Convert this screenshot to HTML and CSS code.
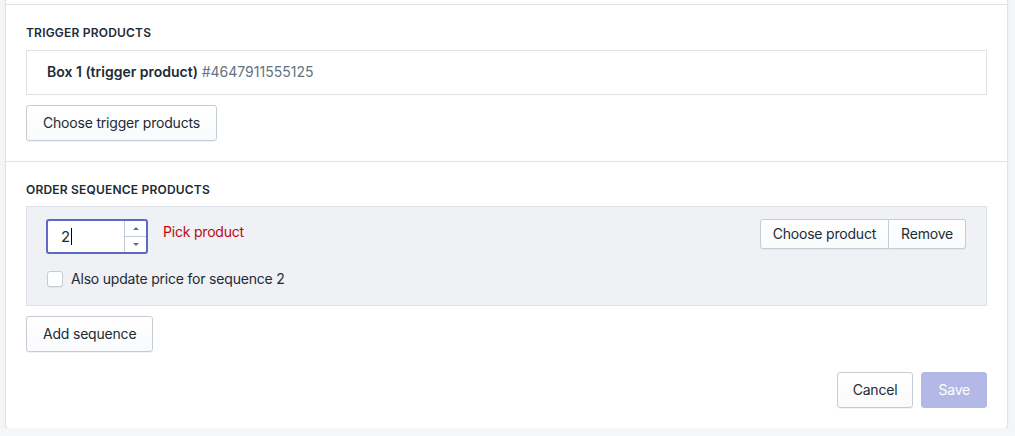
FILE: index.html
```html
<!DOCTYPE html>
<html>
<head>
<meta charset="utf-8">
<link rel="stylesheet" href="styles.css">
</head>
<body>
<div class="page">
  <div class="card">
    <div class="stub"></div>
    <section class="section">
      <h2 class="subheading">Trigger products</h2>
      <div class="product-box">
        <span class="product-name">Box 1 (trigger product)</span>
        <span class="product-id">#4647911555125</span>
      </div>
      <button class="btn btn-mt">Choose trigger products</button>
    </section>
    <section class="section">
      <h2 class="subheading">Order sequence products</h2>
      <div class="sequence">
        <div class="seq-row">
          <div class="number-field">
            <span class="num-value">2<span class="caret"></span></span>
            <div class="spinner">
              <div class="spin-seg"><span class="arrow-up"></span></div>
              <div class="spin-seg"><span class="arrow-down"></span></div>
            </div>
          </div>
          <span class="error">Pick product</span>
          <div class="btn-group">
            <button class="btn btn-slim">Choose product</button>
            <button class="btn btn-slim">Remove</button>
          </div>
        </div>
        <label class="check-row">
          <span class="checkbox"></span>
          <span>Also update price for sequence 2</span>
        </label>
      </div>
      <button class="btn btn-add">Add sequence</button>
    </section>
    <div class="footer">
      <button class="btn">Cancel</button>
      <button class="btn btn-primary">Save</button>
    </div>
  </div>
</div>
</body>
</html>
```

FILE: styles.css
```css
html, body {
  margin: 0;
  padding: 0;
  background: #f4f6f8;
}
body {
  font-family: "Inter", "Roboto", "Liberation Sans", sans-serif;
  font-size: 14px;
  line-height: 20px;
  color: #212b36;
  letter-spacing: -0.2px;
}
.page {
  padding-left: 6px;
}
.card {
  width: 1001px;
  margin-top: -10px;
  background: #fff;
  border-radius: 3px;
  box-shadow: 0 0 0 1px rgba(63,63,68,.05), 0 1px 3px 0 rgba(63,63,68,.15);
}
.stub {
  height: 14px;
}
.section {
  border-top: 1px solid #dfe3e8;
  padding: 20px 20px 20px;
}
.subheading {
  margin: 0 0 8px;
  font-size: 12px;
  line-height: 16px;
  font-weight: 600;
  text-transform: uppercase;
  letter-spacing: 0.2px;
  color: #212b36;
}
.section:first-of-type .subheading {
  margin-bottom: 9px;
}
.product-box {
  border: 1px solid #dfe3e8;
  padding: 11px 20px 12px;
}
.product-name {
  font-weight: 600;
  letter-spacing: 0;
}
.product-id {
  color: #637381;
  letter-spacing: 0;
}
.btn {
  font-family: inherit;
  font-size: 14px;
  line-height: 16px;
  letter-spacing: -0.2px;
  color: #212b36;
  height: 36px;
  padding: 0 16px;
  border: 1px solid #c4cdd5;
  border-radius: 3px;
  background: linear-gradient(180deg, #fff, #f9fafb);
  box-shadow: 0 1px 0 0 rgba(22,29,37,.05);
  cursor: pointer;
}
.btn-mt {
  margin-top: 10px;
}
.btn-add {
  margin-top: 10px;
}
.sequence {
  border: 1px solid #dfe3e8;
  background: #eff1f4;
  padding: 12px 20px 16px 19px;
  display: flex;
  flex-direction: column;
  gap: 15px;
}
.seq-row {
  display: flex;
  align-items: flex-start;
}
.number-field {
  width: 102px;
  height: 35px;
  box-sizing: border-box;
  border: 2px solid #5c6ac4;
  border-radius: 3px;
  background: #fff;
  display: flex;
}
.num-value {
  flex: 1;
  padding-left: 13px;
  line-height: 31px;
  font-size: 15px;
  display: flex;
  align-items: center;
}
.caret {
  display: inline-block;
  width: 1px;
  height: 17px;
  background: #000;
  margin-left: 1px;
}
.spinner {
  width: 21px;
  border-left: 1px solid #c4cdd5;
  display: flex;
  flex-direction: column;
}
.spin-seg {
  flex: 1;
  display: flex;
  align-items: center;
  justify-content: center;
}
.spin-seg + .spin-seg {
  border-top: 1px solid #c4cdd5;
}
.arrow-up, .arrow-down {
  width: 0;
  height: 0;
  border-left: 3px solid transparent;
  border-right: 3px solid transparent;
}
.arrow-up {
  border-bottom: 3px solid #637381;
}
.arrow-down {
  border-top: 3px solid #637381;
}
.error {
  color: #bf0711;
  margin-left: 15px;
  margin-top: 3px;
}
.btn-group {
  margin-left: auto;
  display: flex;
}
.btn-slim {
  height: 30px;
  padding: 0 12px;
}
.btn-group .btn-slim:first-child {
  border-radius: 3px 0 0 3px;
}
.btn-group .btn-slim + .btn-slim {
  border-left: none;
  border-radius: 0 3px 3px 0;
}
.check-row {
  display: flex;
  align-items: center;
  gap: 8px;
  padding-left: 1px;
  color: #212b36;
}
.checkbox {
  width: 16px;
  height: 16px;
  box-sizing: border-box;
  border: 1px solid #c4cdd5;
  border-radius: 3px;
  background: #fff;
  box-shadow: 0 1px 0 rgba(22,29,37,.05);
}
.footer {
  display: flex;
  justify-content: flex-end;
  gap: 8px;
  padding: 0 20px 20px;
}
.btn-primary {
  background: #b3b9e6;
  border-color: #b3b9e6;
  color: #fff;
  box-shadow: none;
}
.footer .btn:first-child {
  padding: 0 15px;
}
```
